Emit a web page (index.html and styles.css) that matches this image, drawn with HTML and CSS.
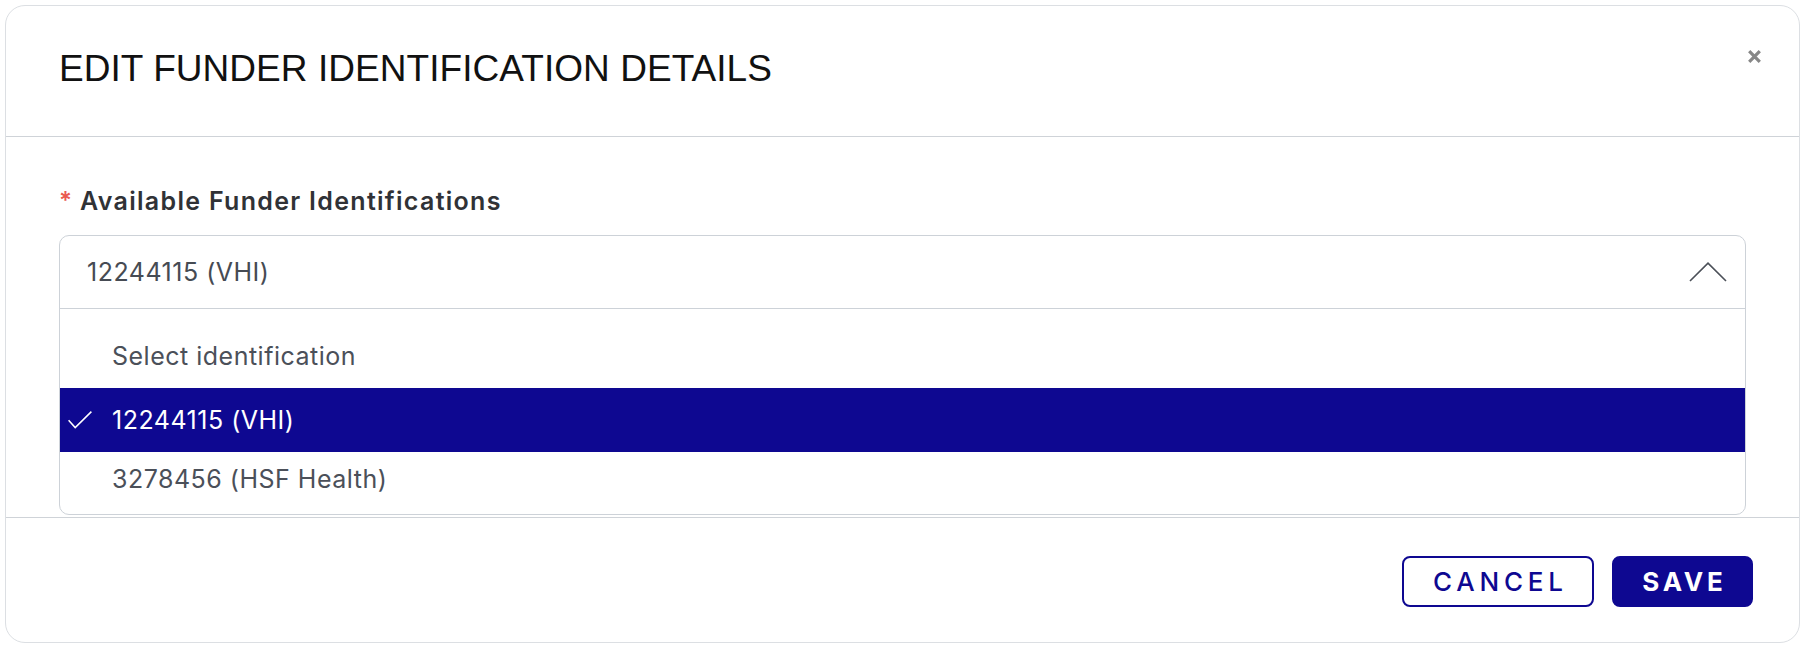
FILE: index.html
```html
<!DOCTYPE html>
<html lang="en">
<head>
<meta charset="utf-8">
<title>Edit Funder Identification Details</title>
<link rel="stylesheet" href="styles.css">
</head>
<body>
<div class="modal" role="dialog" aria-labelledby="modal-title">
  <header class="modal-header">
    <h1 class="modal-title" id="modal-title">EDIT FUNDER IDENTIFICATION DETAILS</h1>
    <button class="modal-close" type="button" aria-label="Close">
      <svg viewBox="0 0 13 13" width="13" height="13" aria-hidden="true">
        <path d="M1.2 1.2 L11.8 11.8 M11.8 1.2 L1.2 11.8" />
      </svg>
    </button>
  </header>

  <div class="modal-body">
    <label class="field-label"><span class="required">*</span>Available Funder Identifications</label>
    <div class="select is-open">
      <div class="select-control">
        <span class="select-value">12244115 (VHI)</span>
        <svg class="chevron" viewBox="0 0 38 20" width="38" height="20" aria-hidden="true">
          <polyline points="1,19 19,1.2 37,19" />
        </svg>
      </div>
      <ul class="select-menu" role="listbox">
        <li class="option" role="option"><span class="check-slot"></span><span>Select identification</span></li>
        <li class="option is-selected" role="option" aria-selected="true">
          <span class="check-slot">
            <svg viewBox="0 0 24 18" width="24" height="18" aria-hidden="true">
              <polyline points="0.6,9.2 7.2,16.6 23.4,0.6" />
            </svg>
          </span>
          <span>12244115 (VHI)</span>
        </li>
        <li class="option" role="option"><span class="check-slot"></span><span>3278456 (HSF Health)</span></li>
      </ul>
    </div>
  </div>

  <footer class="modal-footer">
    <button class="btn btn-outline" type="button">CANCEL</button>
    <button class="btn btn-primary" type="button">SAVE</button>
  </footer>
</div>
</body>
</html>
```

FILE: styles.css
```css
* { box-sizing: border-box; }

html, body { background: #ffffff; }

body {
  margin: 0;
  padding: 5px 8px 4px 5px;
  font-family: "Inter", "Liberation Sans", sans-serif;
  color: #2f3237;
}

.modal {
  height: 638px;
  border: 1px solid #dcdfe3;
  border-radius: 20px;
  background: #ffffff;
  display: flex;
  flex-direction: column;
}

/* Header */
.modal-header {
  height: 131px;
  flex: none;
  display: flex;
  align-items: flex-start;
  padding: 44px 38px 0 53px;
  border-bottom: 1px solid #cfd3d8;
}

.modal-title {
  flex: 1;
  margin: 0;
  font-family: "Liberation Sans", Arial, sans-serif;
  font-weight: 400;
  font-size: 37px;
  line-height: 37px;
  color: #111111;
  letter-spacing: 0.05px;
}

.modal-close {
  width: 13px;
  height: 13px;
  padding: 0;
  border: 0;
  background: none;
  display: flex;
}

.modal-close svg path {
  fill: none;
  stroke: #878787;
  stroke-width: 3.2;
  stroke-linecap: butt;
}

/* Body */
.modal-body {
  flex: none;
  height: 380px;
  padding: 49px 53px 0 53px;
  display: flex;
  flex-direction: column;
}

.field-label {
  display: flex;
  align-items: flex-start;
  font-weight: 600;
  font-size: 25px;
  line-height: 30px;
  letter-spacing: 1.3px;
  color: #303236;
  margin-bottom: 19px;
}

.required {
  color: #ea5a52;
  font-weight: 600;
  font-size: 24px;
  line-height: 30px;
  letter-spacing: 0;
  margin-right: 8px;
}

.select {
  border: 1px solid #cdd2d8;
  border-radius: 10px;
  overflow: hidden;
  background: #ffffff;
}

.select-control {
  height: 73px;
  display: flex;
  align-items: center;
  justify-content: space-between;
  padding: 0 18px 1px 27px;
  border-bottom: 1px solid #cdd2d8;
}

.select-value,
.option {
  font-size: 25px;
  line-height: 30px;
  letter-spacing: 0.5px;
  color: #464b53;
}

.chevron polyline {
  fill: none;
  stroke: #4b5058;
  stroke-width: 1.6;
}

.select-menu {
  list-style: none;
  margin: 0;
  padding: 15px 0 8px 0;
}

.option {
  height: 64px;
  display: flex;
  align-items: center;
  gap: 20px;
  padding-left: 8px;
  color: #4b5059;
}

.option:last-child {
  height: 54px;
}

.option.is-selected {
  background: #0e0891;
  color: #ffffff;
}

.check-slot {
  width: 24px;
  height: 18px;
  flex: none;
  display: flex;
}

.check-slot polyline {
  fill: none;
  stroke: #ffffff;
  stroke-width: 1.5;
}

/* Footer */
.modal-footer {
  flex: 1;
  display: flex;
  justify-content: flex-end;
  align-items: flex-start;
  gap: 18px;
  padding: 38px 46px 0 0;
  border-top: 1px solid #cfd3d8;
}

.btn {
  height: 51px;
  border-radius: 8px;
  font-family: "Inter", "Liberation Sans", sans-serif;
  font-size: 26px;
  line-height: 30px;
  display: flex;
  align-items: center;
  justify-content: center;
  padding: 0;
  cursor: pointer;
}

.btn-outline {
  width: 192px;
  border: 2px solid #0e0891;
  background: #ffffff;
  color: #0e0891;
  font-weight: 500;
  letter-spacing: 4.8px;
  text-indent: 4.8px;
}

.btn-primary {
  width: 141px;
  border: 2px solid #0e0891;
  background: #0e0891;
  color: #ffffff;
  font-weight: 700;
  letter-spacing: 3.8px;
  text-indent: 3.8px;
}
```
